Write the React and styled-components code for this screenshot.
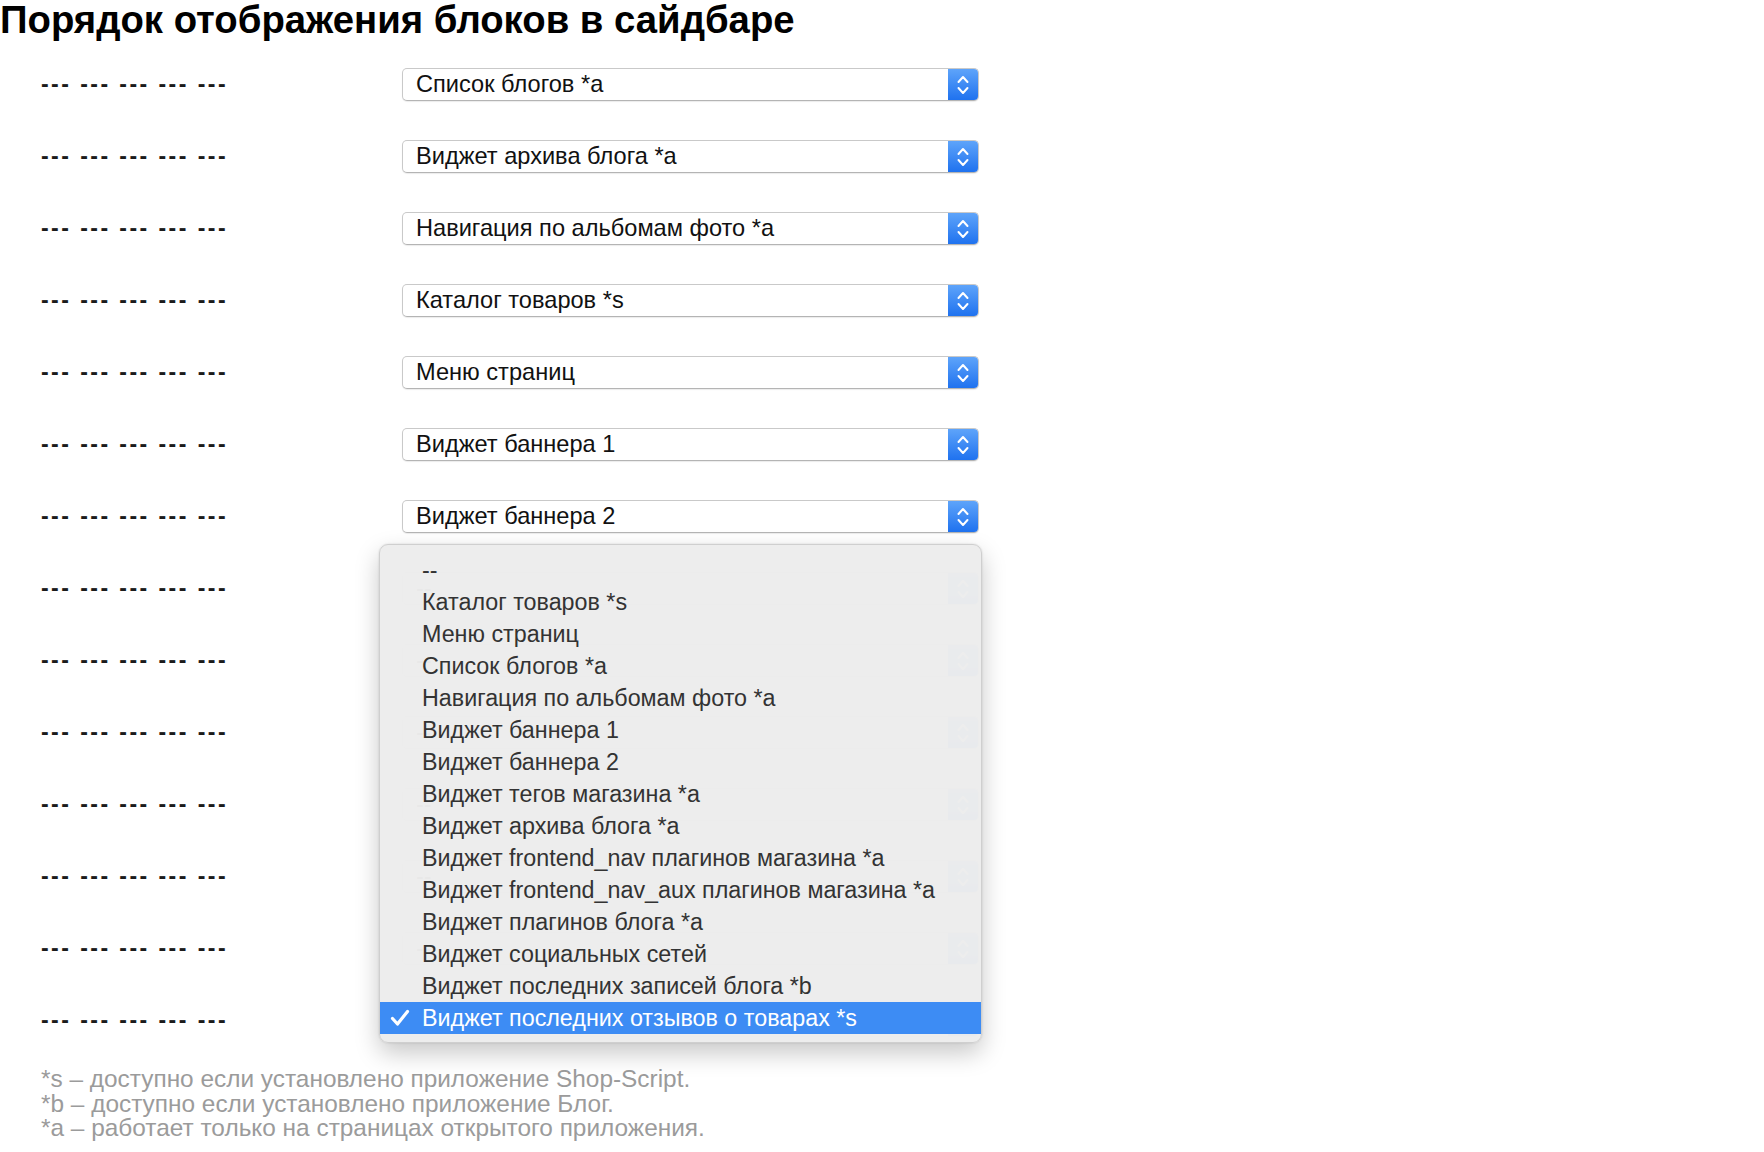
import React from "react";
import styled, { createGlobalStyle } from "styled-components";

const GlobalStyle = createGlobalStyle`
  html, body {
    margin: 0;
    padding: 0;
    background: #fff;
  }
  body {
    font-family: "Liberation Sans", Arial, sans-serif;
    color: #000;
  }
`;

const Page = styled.div`
  width: 1764px;
  min-height: 1152px;
  overflow: hidden;
`;

const Title = styled.h1`
  margin: 0 0 8.8px;
  font-size: 38.3px;
  line-height: 40px;
  font-weight: 700;
`;

const Rows = styled.div`
  display: flex;
  flex-direction: column;
`;

const Row = styled.div`
  display: flex;
  align-items: center;
  height: 72px;
  padding-left: 41px;
`;

const Label = styled.div`
  width: 361px;
  font-size: 23px;
  font-weight: 700;
  letter-spacing: 2.45px;
  color: #1b1b1b;
`;

const SelectWrap = styled.div`
  position: relative;
`;

const SelectBox = styled.div`
  width: 577px;
  height: 33px;
  box-sizing: border-box;
  display: flex;
  align-items: center;
  background: #fff;
  border: 1px solid #c9c9c9;
  border-bottom-color: #b4b4b4;
  border-radius: 5px;
  box-shadow: 0 1px 1px rgba(0, 0, 0, 0.08);
  overflow: hidden;
`;

const SelectText = styled.span`
  flex: 1;
  padding-left: 13px;
  font-size: 23.6px;
  color: #111;
  white-space: nowrap;
`;

const Stepper = styled.div`
  width: 30px;
  height: 100%;
  display: flex;
  align-items: center;
  justify-content: center;
  background: linear-gradient(#5ea4fa, #1f72ef);
`;

const Menu = styled.div`
  position: absolute;
  left: -23px;
  bottom: -6px;
  width: 603px;
  box-sizing: border-box;
  padding: 9px 0 8px;
  background: rgba(237, 237, 237, 0.98);
  border: 1px solid #cfcfcf;
  border-radius: 9px;
  box-shadow: 0 10px 24px rgba(0, 0, 0, 0.22), 0 0 2px rgba(0, 0, 0, 0.15);
  z-index: 5;
`;

const MenuItem = styled.div`
  position: relative;
  height: 32px;
  display: flex;
  align-items: center;
  padding-left: 42px;
  font-size: 23.3px;
  color: ${(p) => (p.$selected ? "#fff" : "#333")};
  background: ${(p) => (p.$selected ? "#3d8cf4" : "transparent")};
  white-space: nowrap;
`;

const Check = styled.svg`
  position: absolute;
  left: 10px;
  top: 7px;
`;

const Notes = styled.div`
  margin-top: 10.5px;
  padding-left: 41px;
  font-size: 24.4px;
  line-height: 24.5px;
  color: #9b9b9b;
`;

const selects = [
  "Список блогов *а",
  "Виджет архива блога *а",
  "Навигация по альбомам фото *а",
  "Каталог товаров *s",
  "Меню страниц",
  "Виджет баннера 1",
  "Виджет баннера 2",
  "--",
  "--",
  "--",
  "--",
  "--",
  "--",
  "Виджет последних отзывов о товарах *s",
];

const options = [
  "--",
  "Каталог товаров *s",
  "Меню страниц",
  "Список блогов *а",
  "Навигация по альбомам фото *а",
  "Виджет баннера 1",
  "Виджет баннера 2",
  "Виджет тегов магазина *а",
  "Виджет архива блога *а",
  "Виджет frontend_nav плагинов магазина *а",
  "Виджет frontend_nav_aux плагинов магазина *а",
  "Виджет плагинов блога *а",
  "Виджет социальных сетей",
  "Виджет последних записей блога *b",
  "Виджет последних отзывов о товарах *s",
];

function Chevrons() {
  return (
    <svg width="14" height="24" viewBox="0 0 14 24" fill="none">
      <path d="M2.5 9 L7 4 L11.5 9" stroke="#fff" strokeWidth="2" strokeLinecap="round" strokeLinejoin="round" />
      <path d="M2.5 15 L7 20 L11.5 15" stroke="#fff" strokeWidth="2" strokeLinecap="round" strokeLinejoin="round" />
    </svg>
  );
}

function DropdownMenu({ selected }) {
  return (
    <Menu>
      {options.map((o) => (
        <MenuItem key={o} $selected={o === selected}>
          {o === selected && (
            <Check width="20" height="18" viewBox="0 0 20 18" fill="none">
              <path d="M2.5 9.5 L7.5 15 L17.5 2.5" stroke="#fff" strokeWidth="3.2" strokeLinecap="round" strokeLinejoin="round" />
            </Check>
          )}
          {o}
        </MenuItem>
      ))}
    </Menu>
  );
}

export default function App() {
  return (
    <Page>
      <GlobalStyle />
      <Title>Порядок отображения блоков в сайдбаре</Title>
      <Rows>
        {selects.map((s, i) => (
          <Row key={i}>
            <Label>--- --- --- --- ---</Label>
            <SelectWrap>
              <SelectBox>
                <SelectText>{s}</SelectText>
                <Stepper>
                  <Chevrons />
                </Stepper>
              </SelectBox>
              {i === selects.length - 1 && <DropdownMenu selected={s} />}
            </SelectWrap>
          </Row>
        ))}
      </Rows>
      <Notes>
        <div>*s – доступно если установлено приложение Shop-Script.</div>
        <div>*b – доступно если установлено приложение Блог.</div>
        <div>*а – работает только на страницах открытого приложения.</div>
      </Notes>
    </Page>
  );
}
